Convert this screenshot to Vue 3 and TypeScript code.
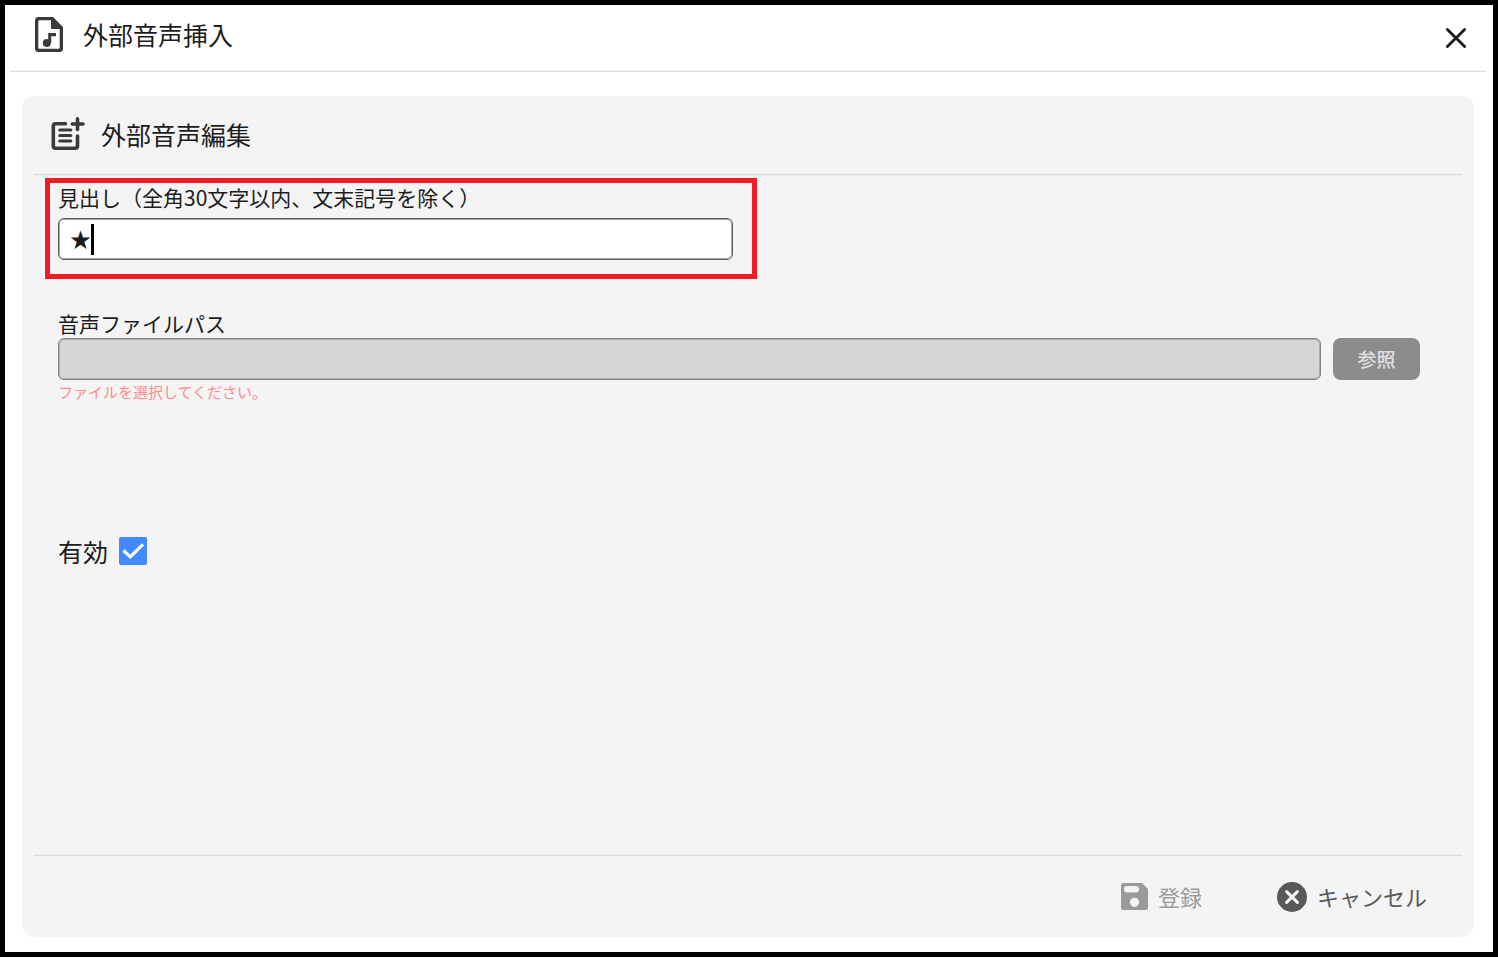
<script setup lang="ts">
import { ref } from 'vue'

const heading = ref<string>('★')
const filePath = ref<string>('')
const enabled = ref<boolean>(true)
</script>

<template>
  <main class="dialog" role="dialog" aria-labelledby="dialog-title">
    <header class="titlebar">
      <svg class="icon-file" viewBox="0 0 28 35" aria-hidden="true">
        <path fill-rule="evenodd" fill="#3a3a3a" d="M3.500 0H18L28 10V31.500Q28 35 24.500 35H3.500Q0 35 0 31.500V3.500Q0 0 3.500 0ZM3.300 4.300V30.700Q3.300 31.700 4.300 31.700H23.700Q24.700 31.700 24.700 30.700V12H16V3.300H4.300Q3.300 3.300 3.300 4.300Z" />
        <circle cx="11.800" cy="26" r="4" fill="#3a3a3a" />
        <path d="M13.200 26V16H21v3.200h-4.800V26z" fill="#3a3a3a" />
      </svg>
      <h1 id="dialog-title">外部音声挿入</h1>
      <button class="close" type="button" aria-label="閉じる">
        <svg viewBox="0 0 20 20" aria-hidden="true">
          <path d="M1.400 1.400L18.600 18.600M18.600 1.400L1.400 18.600" fill="none" stroke="#1c1c1c" stroke-width="2.800" stroke-linecap="round" />
        </svg>
      </button>
    </header>

    <section class="panel">
      <div class="panel-head">
        <svg class="icon-add" viewBox="0 0 34 34" aria-hidden="true" fill="none" stroke="#3a3a3a" stroke-width="3.600" stroke-linecap="round">
          <path d="M14.500 6.800H4.800Q2.300 6.800 2.300 9.300V28.800Q2.300 31.300 4.800 31.300H24Q26.500 31.300 26.500 28.800V19" stroke-linejoin="round" />
          <path d="M26.500 1.900V12.400M21.300 7H32" />
          <path d="M8.800 13H19.800M8.800 18.500H19.800M8.800 24H19.800" stroke-width="3.200" />
        </svg>
        <h2>外部音声編集</h2>
      </div>

      <form class="form" @submit.prevent>
        <div class="highlight">
          <label for="heading">見出し（全角30文字以内、文末記号を除く）</label>
          <div class="field">
            <input id="heading" v-model="heading" class="box" type="text" />
            <span class="caret" aria-hidden="true"></span>
          </div>
        </div>

        <div class="file">
          <label for="path">音声ファイルパス</label>
          <div class="file-row">
            <input id="path" v-model="filePath" class="box" type="text" disabled />
            <button class="browse" type="button" disabled>参照</button>
          </div>
          <p class="error">ファイルを選択してください。</p>
        </div>

        <div class="enabled">
          <label for="enabled">有効</label>
          <span class="check">
            <input id="enabled" v-model="enabled" type="checkbox" />
            <svg v-if="enabled" viewBox="0 0 28 28" aria-hidden="true">
              <path d="M4.500 13.500L11.300 19.800L24 7.300" fill="none" stroke="#fff" stroke-width="3.200" />
            </svg>
          </span>
        </div>
      </form>

      <footer class="actions">
        <button class="action save" type="button" disabled>
          <svg class="icon-save" viewBox="0 0 27 27" aria-hidden="true">
            <path fill="#9a9a9a" d="M2.500 0H21L27 6V24.500Q27 27 24.500 27H2.500Q0 27 0 24.500V2.500Q0 0 2.500 0Z" />
            <rect x="3" y="3" width="15" height="6.400" rx="3.200" fill="#f4f4f4" />
            <circle cx="13.500" cy="19.300" r="4.600" fill="#f4f4f4" />
          </svg>
          <span>登録</span>
        </button>
        <button class="action cancel" type="button">
          <svg class="icon-cancel" viewBox="0 0 30 30" aria-hidden="true">
            <circle cx="15" cy="15" r="15" fill="#595959" />
            <path d="M9.600 9.600L20.400 20.400M20.400 9.600L9.600 20.400" stroke="#f4f4f4" stroke-width="3" stroke-linecap="round" />
          </svg>
          <span>キャンセル</span>
        </button>
      </footer>
    </section>
  </main>
</template>

<style>
body {
  background: #fff;
}
</style>

<style scoped>
.dialog,
.dialog * {
  box-sizing: border-box;
}

.dialog {
  display: flex;
  flex-direction: column;
  min-height: calc(100vh - 2px);
  border: 5px solid #000;
  background: #fff;
  color: #1c1c1c;
  font-family: "Noto Sans CJK JP", "Noto Sans", sans-serif;
  font-size: 21px;
}

button,
input {
  font: inherit;
  color: inherit;
}

button {
  padding: 0;
  border: 0;
  background: none;
}

h1,
h2,
p {
  margin: 0;
  font-weight: 400;
}

h1,
h2 {
  font-size: 25px;
  line-height: 36px;
}

svg {
  display: block;
  flex: none;
}

.titlebar {
  display: flex;
  align-items: center;
  height: 67px;
  margin: 0 7px 0 5px;
  padding: 0 20px 8px 25px;
  border-bottom: 1px solid #dcdcdc;
  box-shadow: inset 0 -1px #f0f0f0;
}

.icon-file {
  width: 28px;
  height: 35px;
  margin-right: 20px;
}

.close {
  margin: 7px 0 0 auto;
}

.close svg {
  width: 20px;
  height: 20px;
}

.panel {
  display: flex;
  flex: 1;
  flex-direction: column;
  margin: 24px 19px 15px 17px;
  padding: 0 12px;
  border-radius: 12px;
  background: #f4f4f4;
}

.panel-head {
  display: flex;
  align-items: center;
  height: 79px;
  padding: 0 17px 2px;
  border-bottom: 1px solid #dcdcdc;
  box-shadow: 0 1px #ebebeb;
}

.icon-add {
  width: 34px;
  height: 34px;
  margin-right: 16px;
}

.form {
  flex: 1;
  padding: 3px 42px 0 11px;
}

label {
  display: block;
  line-height: 28px;
}

.highlight {
  width: 100%;
  max-width: 712px;
  height: 101px;
  padding: 0 19px 0 8px;
  border: 5px solid #ed1c24;
}

.field {
  position: relative;
  margin-top: 7px;
}

.box {
  display: block;
  width: 100%;
  height: 42px;
  padding: 0 11px 2px;
  border: 1px solid #5c5c5c;
  border-radius: 6px;
  background: #fff;
  box-shadow: inset 0 0 0 1px #a8a8a8;
  outline: none;
}

.box:disabled {
  border-color: #848484;
  background: #d6d6d6;
  box-shadow: inset 0 0 0 1px #acacac;
}

.caret {
  position: absolute;
  top: 6px;
  left: 33px;
  width: 3px;
  height: 31px;
  background: #000;
}

.file {
  margin-top: 30px;
  padding-left: 13px;
}

.file-row {
  display: flex;
  gap: 12px;
  margin-top: 1px;
}

.browse {
  flex: none;
  width: 87px;
  height: 42px;
  padding-bottom: 2px;
  border-radius: 8px;
  background: #8c8c8c;
  color: #e0e0e0;
  font-size: 19px;
  font-weight: 500;
}

.error {
  color: #ff8a8a;
  font-size: 15px;
  line-height: 24px;
}

.enabled {
  display: flex;
  align-items: center;
  gap: 11px;
  margin-top: 129px;
  padding-left: 13px;
  font-size: 25px;
}

.enabled label {
  line-height: 36px;
}

.check {
  position: relative;
  width: 28px;
  height: 28px;
}

.check input {
  display: block;
  width: 28px;
  height: 28px;
  margin: 0;
  border-radius: 2px;
  appearance: none;
}

.check input:checked {
  background: #448aff;
}

.check input:not(:checked) {
  border: 2px solid #6a6a6a;
}

.check svg {
  position: absolute;
  inset: 0;
  pointer-events: none;
}

.actions {
  display: flex;
  align-items: center;
  justify-content: flex-end;
  gap: 75px;
  height: 82px;
  padding-right: 35px;
  border-top: 1px solid #dcdcdc;
  box-shadow: 0 -1px #ebebeb;
}

.action {
  display: flex;
  align-items: center;
  gap: 10px;
  font-size: 22px;
  line-height: 32px;
}

.action span {
  padding-bottom: 2px;
}

.save {
  color: #9a9a9a;
}

.cancel {
  color: #595959;
}

.icon-save {
  width: 27px;
  height: 27px;
}

.icon-cancel {
  width: 30px;
  height: 30px;
}
</style>
